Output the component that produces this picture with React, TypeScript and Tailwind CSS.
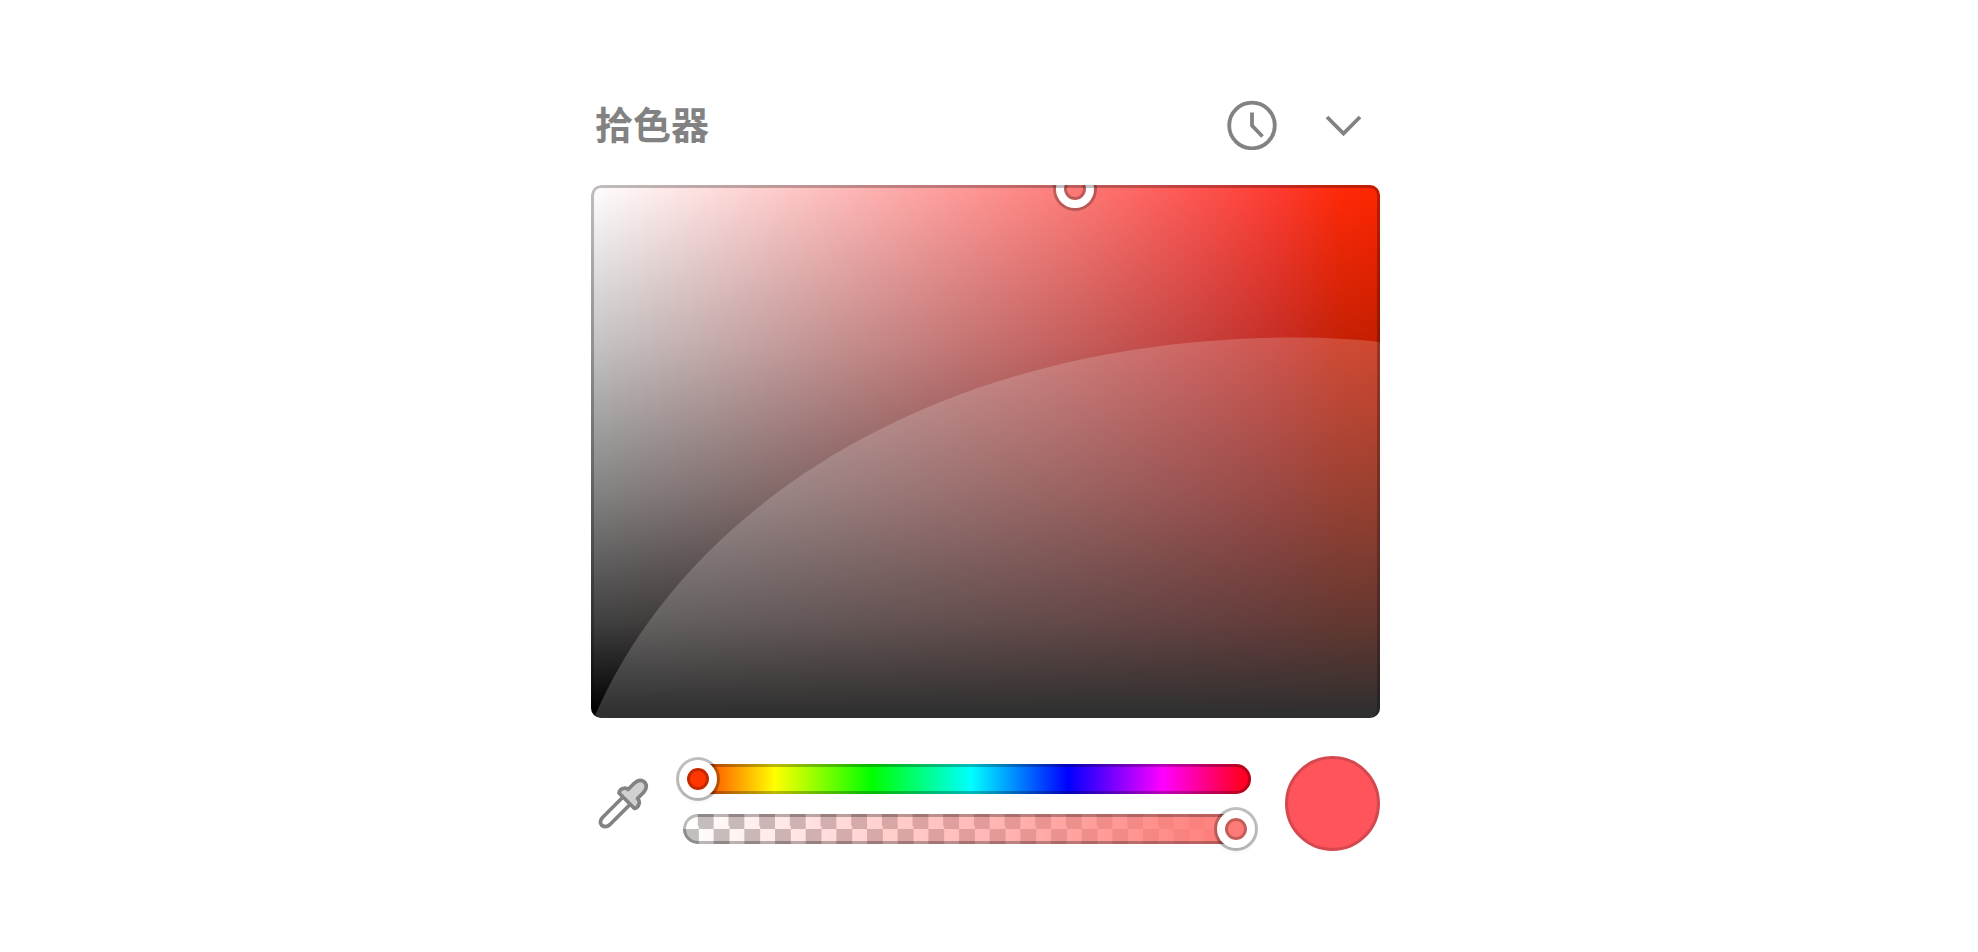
import { useState } from 'react';
import clsx from 'clsx';

const THUMB =
  'col-start-1 row-start-1 -mx-1 h-[38px] cursor-pointer appearance-none bg-transparent outline-none ' +
  '[&::-webkit-slider-thumb]:box-border [&::-webkit-slider-thumb]:size-[38px] [&::-webkit-slider-thumb]:appearance-none ' +
  '[&::-webkit-slider-thumb]:rounded-full [&::-webkit-slider-thumb]:border-8 [&::-webkit-slider-thumb]:border-white ' +
  '[&::-webkit-slider-thumb]:shadow-[0_0_0_3px_rgba(0,0,0,0.25),0_3px_5px_rgba(0,0,0,0.1),inset_0_0_0_3px_rgba(0,0,0,0.24)]';

export default function App() {
  const [hue, setHue] = useState(0);
  const [alpha, setAlpha] = useState(100);

  return (
    <main className="flex min-h-screen justify-center bg-white pt-[93px] pr-[7px] font-['Liberation_Sans','Noto_Sans_CJK_SC',sans-serif]">
      <section className="w-full max-w-[789px]" aria-label="拾色器">
        <header className="mb-7 flex h-16 items-center pr-3 pl-1 text-[#828282]">
          <h1 className="flex-1 pt-0.5 text-[38px] leading-16 font-bold">拾色器</h1>
          <div className="flex items-center gap-[41px]">
            <button type="button" aria-label="历史记录" className="size-[50px]">
              <ClockIcon />
            </button>
            <button type="button" aria-label="展开" className="size-[50px]">
              <ChevronIcon />
            </button>
          </div>
        </header>

        <Palette />

        <div className="mt-[38px] flex items-center gap-[34px]">
          <button type="button" aria-label="吸管" className="w-[58px] pl-[7px]">
            <EyedropperIcon />
          </button>
          <div className="flex flex-1 flex-col gap-5">
            <Slider
              label="色相"
              max={360}
              value={hue}
              onChange={setHue}
              trackClass="bg-[linear-gradient(to_right,#ff1a00_0%,#ff4000_3%,#ffff00_16.2%,#00ff00_33.3%,#00ffff_50.7%,#0000ff_67.8%,#ff00ff_84.5%,#ff0028_98%,#ff0020_100%)]"
              thumbClass="[&::-webkit-slider-thumb]:bg-[#ff3600]"
            />
            <Slider
              label="不透明度"
              max={100}
              value={alpha}
              onChange={setAlpha}
              trackClass="bg-[linear-gradient(to_right,rgba(255,124,120,0),#ff7c78_98%),repeating-conic-gradient(#c2c0c0_0_25%,#ffffff_0_50%)] bg-[length:100%_100%,5.4%_30px]"
              thumbClass="[&::-webkit-slider-thumb]:bg-[#ff7b77]"
            />
          </div>
          <div className="size-[95px] rounded-full border-3 border-[#d6484f] bg-[#ff545c]" />
        </div>
      </section>
    </main>
  );
}

function Palette() {
  return (
    <div className="relative h-[533px] overflow-hidden rounded-[10px] bg-[linear-gradient(to_bottom,rgba(0,0,0,0)_0%,rgba(0,0,0,0.23)_30%,rgba(0,0,0,0.49)_58%,rgba(0,0,0,0.75)_82%,#000_99%),linear-gradient(to_right,#fff_0%,#ffbdbd_30%,#ff7b78_61%,#ff5450_77%,#ff3b30_87%,#ff2a08_95%,#ff2600_100%)]">
      {/* contrast region */}
      <svg className="absolute inset-0 size-full" viewBox="0 0 789 533" preserveAspectRatio="none">
        <path d="M3 533C88 333 332 152.5 707 152.5Q750 152.5 789 157V533Z" fill="#fff" fillOpacity="0.19" />
      </svg>
      <div className="absolute top-[4px] left-[61.3%] size-[38px] -translate-1/2 rounded-full border-8 border-white shadow-[0_0_0_3px_rgba(0,0,0,0.25),inset_0_0_0_3px_rgba(0,0,0,0.25)]" />
      <div className="absolute inset-0 rounded-[10px] border-3 border-b-0 border-black/25" />
    </div>
  );
}

function Slider({
  label,
  max,
  value,
  onChange,
  trackClass,
  thumbClass,
}: {
  label: string;
  max: number;
  value: number;
  onChange: (v: number) => void;
  trackClass: string;
  thumbClass: string;
}) {
  return (
    <div className="grid h-[30px] grid-cols-1 grid-rows-[30px] items-center">
      <div className={clsx('col-start-1 row-start-1 h-[30px] rounded-full', trackClass)}>
        <div className="h-full rounded-full shadow-[inset_0_0_0_3px_rgba(0,0,0,0.27)]" />
      </div>
      <input
        type="range"
        aria-label={label}
        min={0}
        max={max}
        value={value}
        onChange={(e) => onChange(Number(e.target.value))}
        className={clsx(THUMB, thumbClass)}
      />
    </div>
  );
}

function ClockIcon() {
  return (
    <svg viewBox="0 0 50 50" className="size-full" fill="none" stroke="currentColor" strokeWidth="3.8">
      <circle cx="25" cy="25.500" r="22.800" />
      <path d="M25 12.500v13l10.500 11" />
    </svg>
  );
}

function ChevronIcon() {
  return (
    <svg viewBox="0 0 50 50" className="size-full" fill="none" stroke="currentColor" strokeWidth="3.8">
      <path d="M9 17l16.500 16.500 16.500-16.500" />
    </svg>
  );
}

function EyedropperIcon() {
  return (
    <svg viewBox="0 0 51 51" className="size-[51px]" stroke="#828282" strokeWidth="3.7" strokeLinejoin="round">
      <path d="M24 20L4.500 39.500Q1 43.500 3.500 47Q7.500 50.500 12 46.500L31.500 27" fill="#fff" />
      <path
        d="M36 5.500Q41.500 0 46.500 4Q50.500 9 45.500 14.500L39.500 20.500Q42 22.500 41 26Q40 29.500 36.500 30.500L21 15Q21.500 11.500 25 10.500Q28 9.500 30 11.500Z"
        fill="#d0d0d0"
      />
    </svg>
  );
}
